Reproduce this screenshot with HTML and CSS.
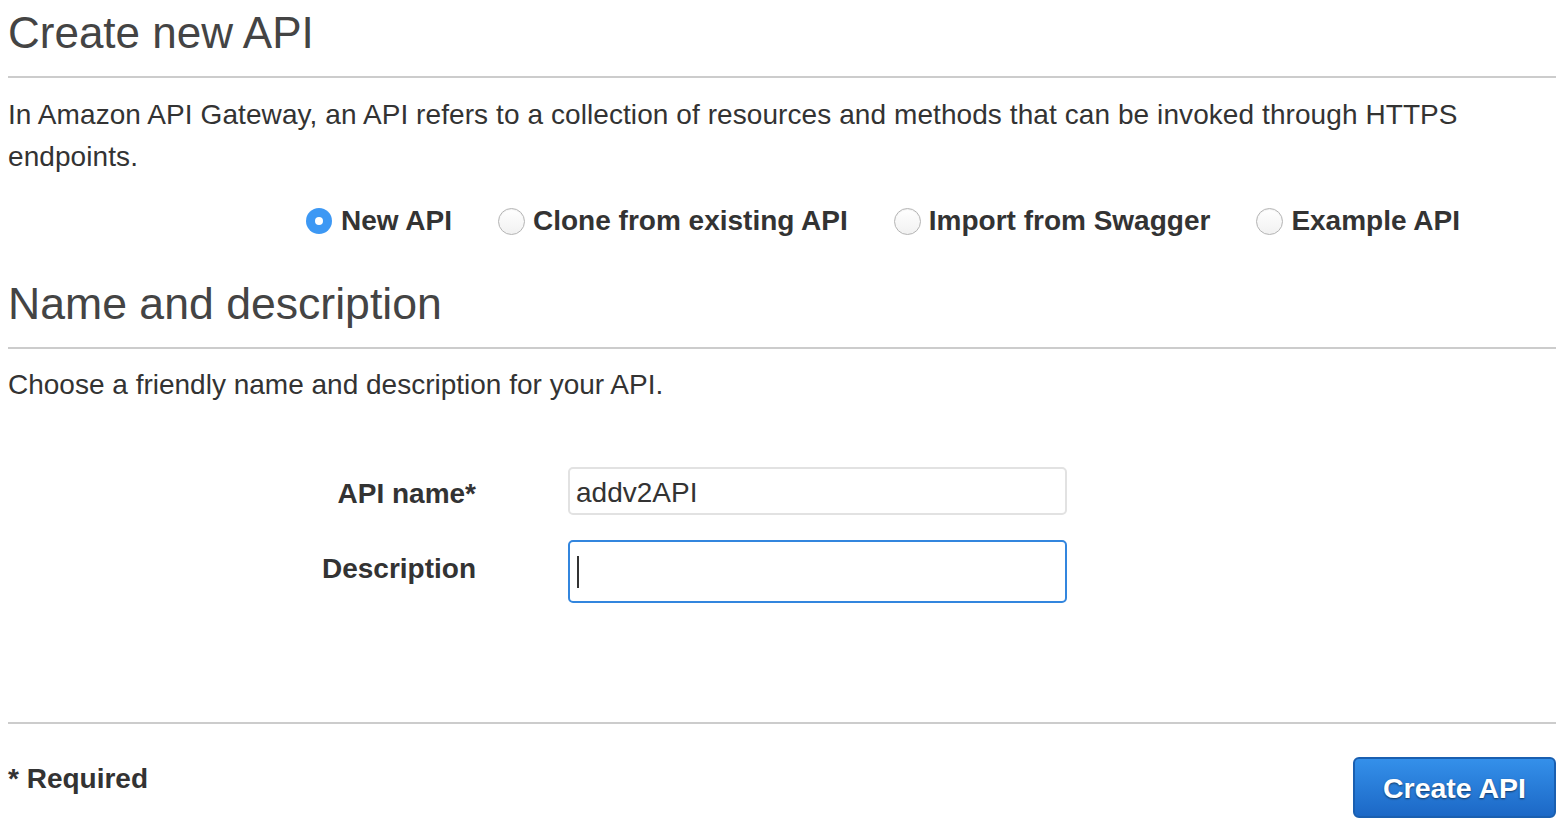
FILE: index.html
```html
<!DOCTYPE html>
<html>
<head>
<meta charset="utf-8">
<link rel="stylesheet" href="styles.css">
</head>
<body>
<div class="page">
  <div class="section-head">
    <h1 class="title">Create new API</h1>
  </div>
  <p class="text intro">In Amazon API Gateway, an API refers to a collection of resources and methods that can be invoked through HTTPS endpoints.</p>
  <div class="radios">
    <label class="radio-opt"><span class="radio checked"></span><span class="radio-label">New API</span></label>
    <label class="radio-opt"><span class="radio"></span><span class="radio-label">Clone from existing API</span></label>
    <label class="radio-opt"><span class="radio"></span><span class="radio-label">Import from Swagger</span></label>
    <label class="radio-opt"><span class="radio"></span><span class="radio-label">Example API</span></label>
  </div>
  <div class="section-head sub">
    <h2 class="title">Name and description</h2>
  </div>
  <p class="text choose">Choose a friendly name and description for your API.</p>
  <div class="form">
    <div class="field-label l1">API name*</div>
    <div class="input name-input">addv2API</div>
    <div class="field-label l2">Description</div>
    <div class="input desc-input"><span class="caret"></span></div>
  </div>
  <div class="footer">
    <div class="required">* Required</div>
    <div class="btn">Create API</div>
  </div>
</div>
</body>
</html>
```
FILE: styles.css
```css
html, body {
  margin: 0;
  padding: 0;
  background: #ffffff;
}
body {
  font-family: "Liberation Sans", Arial, Helvetica, sans-serif;
  color: #333333;
}
.page {
  padding: 8px 8px 0 8px;
}
.section-head {
  border-bottom: 2px solid #cccccc;
  padding-bottom: 18px;
}
.title {
  margin: 0;
  font-weight: normal;
  color: #444444;
  font-size: 44px;
  line-height: 50px;
}
.sub {
  margin-top: 37px;
  padding-bottom: 18px;
}
.sub .title {
  font-size: 44.6px;
}
.text {
  margin: 0;
  font-size: 28px;
  line-height: 42px;
  color: #333333;
}
.intro {
  margin-top: 16px;
  letter-spacing: 0.08px;
}
.radios {
  display: flex;
  align-items: center;
  gap: 46px;
  margin-top: 22px;
  padding-left: 298px;
  height: 42px;
}
.radio-opt {
  display: flex;
  align-items: center;
  gap: 8px;
}
.radio-label {
  font-size: 28px;
  font-weight: bold;
  line-height: 42px;
  color: #333333;
}
.radio {
  box-sizing: border-box;
  width: 27px;
  height: 27px;
  border-radius: 50%;
  border: 1px solid #b4b4b4;
  background: linear-gradient(#ffffff, #f1f1f1);
  box-shadow: inset 0 1px 1px rgba(0,0,0,0.06);
  position: relative;
}
.radio.checked {
  width: 26px;
  height: 26px;
  border: none;
  background: #3d98f4;
  box-shadow: none;
  margin-right: 1px;
}
.radio.checked::after {
  content: "";
  position: absolute;
  left: 9px;
  top: 9px;
  width: 8px;
  height: 8px;
  border-radius: 50%;
  background: #ffffff;
}
.choose {
  margin-top: 15px;
}
.form {
  display: grid;
  grid-template-columns: 468px 499px;
  column-gap: 92px;
  row-gap: 25px;
  margin-top: 61px;
  align-items: center;
}
.field-label {
  text-align: right;
  font-size: 28px;
  font-weight: bold;
  line-height: 42px;
  color: #333333;
}
.l1 {
  padding-top: 6px;
}
.l2 {
  padding-bottom: 6px;
}
.input {
  box-sizing: border-box;
  border-radius: 5px;
  font-size: 28px;
  color: #333333;
}
.name-input {
  height: 48px;
  border: 2px solid #e2e2e2;
  padding: 2px 6px 0 6px;
  line-height: 44px;
}
.desc-input {
  height: 63px;
  border: 2px solid #3386de;
  padding: 10px 7px;
  display: flex;
  align-items: center;
}
.caret {
  display: block;
  width: 2px;
  height: 32px;
  background: #333333;
}
.footer {
  margin-top: 119px;
  border-top: 2px solid #cccccc;
  display: flex;
  justify-content: space-between;
  align-items: flex-start;
  padding-top: 33px;
}
.required {
  font-size: 28px;
  font-weight: bold;
  line-height: 42px;
  color: #333333;
  margin-top: 1px;
}
.btn {
  box-sizing: border-box;
  width: 203px;
  height: 61px;
  border-radius: 6px;
  border: 2px solid #1a5fb0;
  background: linear-gradient(#3490ea, #1c68c6);
  color: #ffffff;
  font-size: 28.5px;
  font-weight: bold;
  line-height: 59px;
  text-align: center;
  text-shadow: 0 1px 2px rgba(0,0,0,0.55);
}
```
